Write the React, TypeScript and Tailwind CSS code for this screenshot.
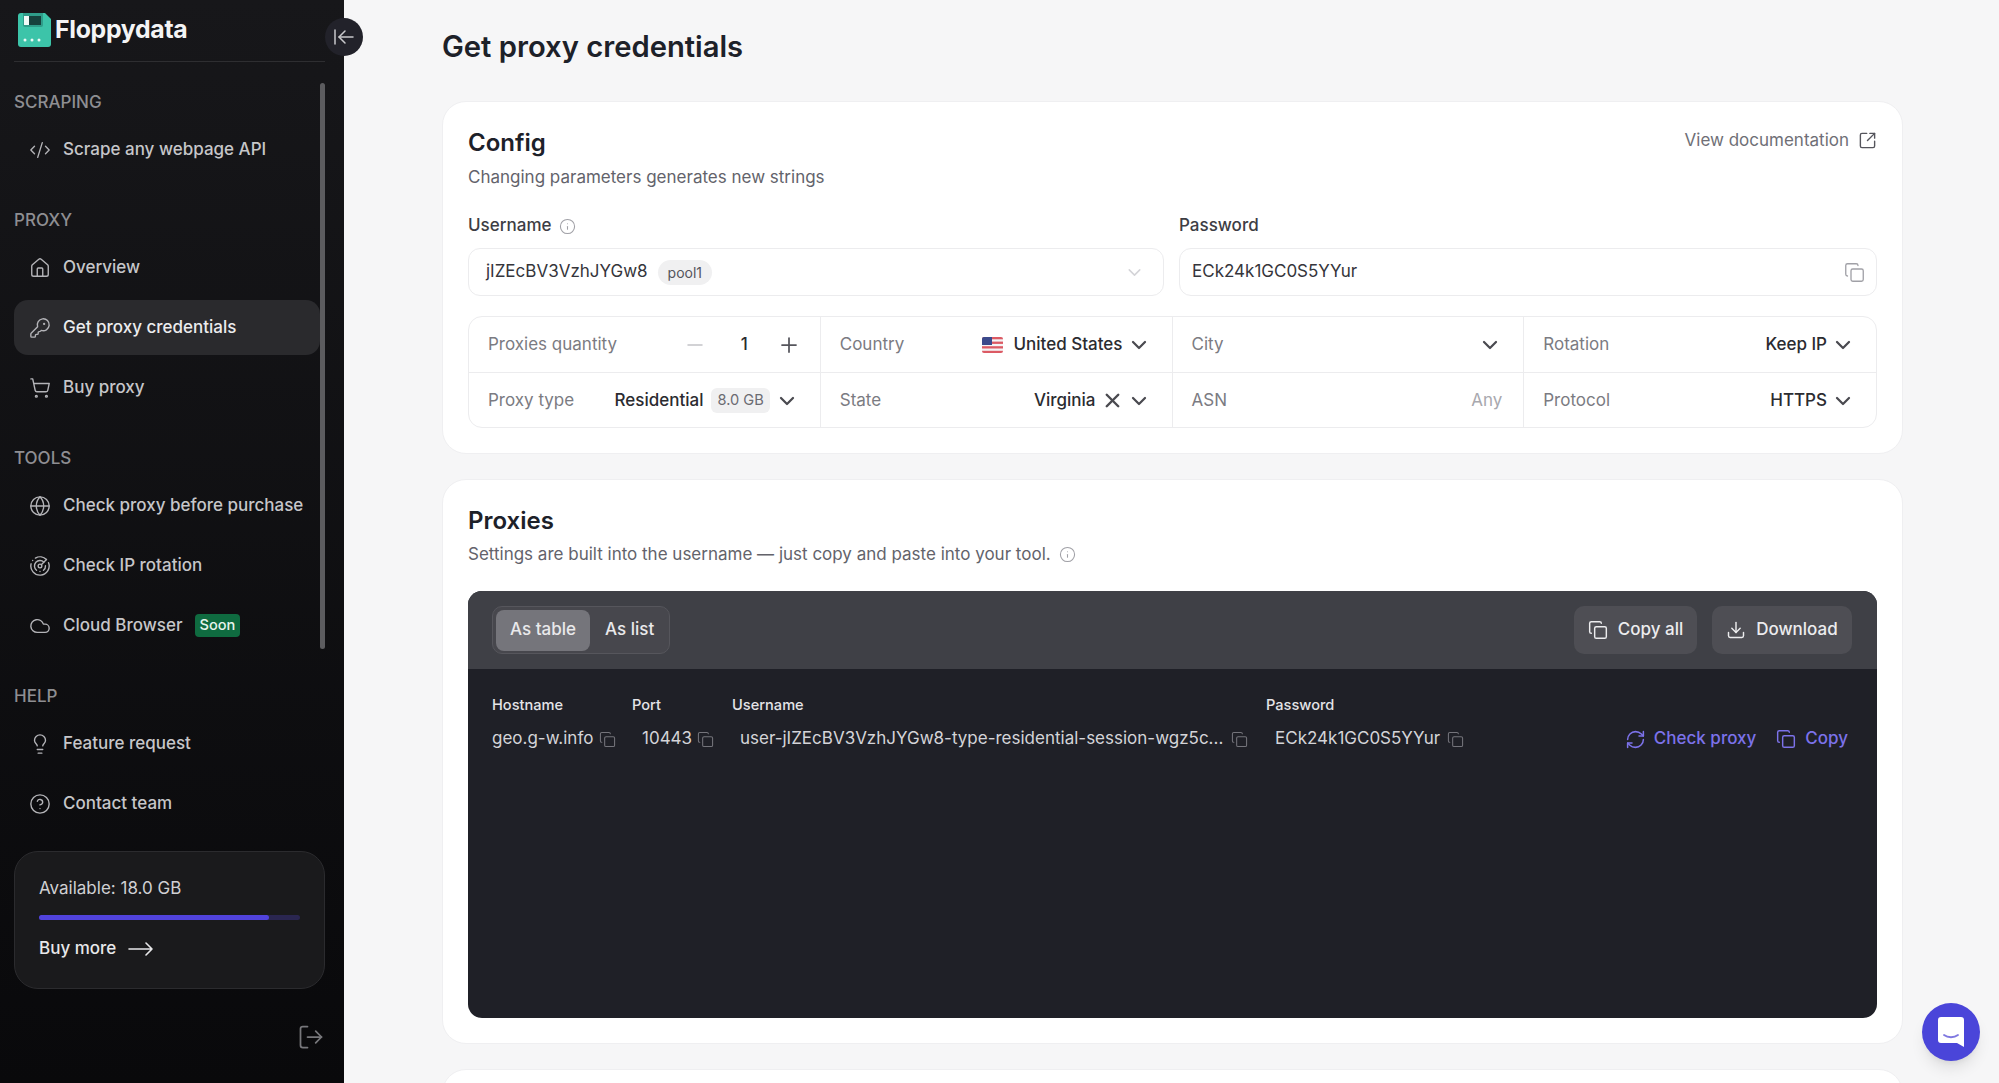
import React from 'react';
import {
  ArrowLeftToLine,
  ChevronDown,
  CircleHelp,
  Cloud,
  CodeXml,
  Copy,
  Download,
  Globe,
  House,
  Info,
  KeyRound,
  Lightbulb,
  LogOut,
  Minus,
  Plus,
  Radar,
  RefreshCw,
  ShoppingCart,
  SquareArrowOutUpRight,
  X,
} from 'lucide-react';

function LogoMark() {
  return (
    <svg width="33" height="34" viewBox="0 0 33 34" className="shrink-0">
      <path d="M3 0h24l6 6v25a3 3 0 0 1-3 3H3a3 3 0 0 1-3-3V3a3 3 0 0 1 3-3z" fill="#3cc4a9" />
      <path d="M5 0h20v12a2 2 0 0 1-2 2H7a2 2 0 0 1-2-2z" fill="#2f9d8a" />
      <rect x="6" y="3" width="5" height="9" fill="#f2faf8" />
      <rect x="11" y="3" width="12" height="9" fill="#12332f" opacity="0.85" />
      <circle cx="7" cy="27" r="1.5" fill="#eafaf6" />
      <circle cx="14" cy="27" r="1.5" fill="#eafaf6" />
      <circle cx="21" cy="27" r="1.5" fill="#eafaf6" />
    </svg>
  );
}

function UsFlag() {
  return (
    <svg width="21" height="16" viewBox="0 0 21 16" className="shrink-0 rounded-[2px]">
      <rect width="21" height="16" fill="#f4f4f5" />
      <rect y="0" width="21" height="2.3" fill="#dc5a64" />
      <rect y="4.6" width="21" height="2.3" fill="#dc5a64" />
      <rect y="9.2" width="21" height="2.3" fill="#dc5a64" />
      <rect y="13.8" width="21" height="2.2" fill="#dc5a64" />
      <rect width="10" height="8" fill="#3b4a8c" />
    </svg>
  );
}

function NavItem({
  icon: Icon,
  label,
  active,
  soon,
}: {
  icon: React.ComponentType<{ className?: string; strokeWidth?: number }>;
  label: string;
  active?: boolean;
  soon?: boolean;
}) {
  return (
    <div
      className={`flex h-[55px] items-center gap-3 rounded-[14px] pl-[15px] text-[17px] font-medium ${
        active ? 'bg-[#2a2a2d] text-[#ececee]' : 'text-[#c6c6c9]'
      }`}
    >
      <Icon className="h-[22px] w-[22px] shrink-0 text-[#b4b4b8]" strokeWidth={1.5} />
      <span>{label}</span>
      {soon && (
        <span className="rounded-[4px] bg-[#0f6b40] px-[5px] py-[2px] text-[14.6px] leading-[19px] text-[#e6f4ec]">
          Soon
        </span>
      )}
    </div>
  );
}

function NavSection({ title, children }: { title: string; children: React.ReactNode }) {
  return (
    <div className="mb-[31px]">
      <div className="mb-2 h-6 text-[17px] leading-6 font-medium text-[#8e8e92]">{title}</div>
      <div className="flex flex-col gap-[5px]">{children}</div>
    </div>
  );
}

function Sidebar() {
  return (
    <aside className="relative flex h-[1083px] w-[344px] shrink-0 flex-col bg-gradient-to-b from-[#17171a] to-[#09090b] px-[14px]">
      <div className="flex h-[62px] w-[311px] items-center gap-[4px] border-b border-[#2e2e31] pb-[2px] pl-1">
        <LogoMark />
        <span className="text-[24.8px] font-bold tracking-[-0.3px] text-[#f4f4f5]">Floppydata</span>
      </div>

      <button className="absolute top-[18px] left-[325px] z-10 flex h-[38px] w-[38px] items-center justify-center rounded-full bg-[#22222a] text-[#c9c9cc]">
        <ArrowLeftToLine className="h-6 w-6" strokeWidth={1.5} />
      </button>

      {/* scrollbar thumb */}
      <div className="absolute top-[83px] left-[320px] h-[566px] w-[5px] rounded-full bg-[#5c5c5f]" />

      <nav className="w-[306px] pt-[28px]">
        <NavSection title="SCRAPING">
          <NavItem icon={CodeXml} label="Scrape any webpage API" />
        </NavSection>
        <NavSection title="PROXY">
          <NavItem icon={House} label="Overview" />
          <NavItem icon={KeyRound} label="Get proxy credentials" active />
          <NavItem icon={ShoppingCart} label="Buy proxy" />
        </NavSection>
        <NavSection title="TOOLS">
          <NavItem icon={Globe} label="Check proxy before purchase" />
          <NavItem icon={Radar} label="Check IP rotation" />
          <NavItem icon={Cloud} label="Cloud Browser" soon />
        </NavSection>
        <NavSection title="HELP">
          <NavItem icon={Lightbulb} label="Feature request" />
          <NavItem icon={CircleHelp} label="Contact team" />
        </NavSection>
      </nav>

      <div className="mt-[-11px] h-[138px] w-[311px] rounded-[24px] border border-[#2b2b2e] bg-[#1a1a1c] px-6 pt-6">
        <div className="text-[17px] leading-6 font-normal text-[#d0d0d3]">Available: 18.0 GB</div>
        <div className="mt-[15px] h-[5px] w-[261px] rounded-full bg-[#2a2650]">
          <div className="h-full w-[230px] rounded-full bg-[#5143dc]" />
        </div>
        <div className="mt-[16px] flex h-[26px] items-center gap-3 text-[17px] font-medium text-[#e8e8ea]">
          Buy more
          <svg width="25" height="14" viewBox="0 0 25 14" fill="none" stroke="currentColor" strokeWidth="1.6" strokeLinecap="round" strokeLinejoin="round">
            <path d="M1 7h23M18 1l6 6-6 6" />
          </svg>
        </div>
      </div>

      <div className="mt-[34px] flex w-[311px] justify-end">
        <LogOut className="h-[28px] w-[28px] text-[#77777b]" strokeWidth={1.5} />
      </div>
    </aside>
  );
}

function Cell({
  label,
  children,
  right,
  bottom,
}: {
  label: string;
  children: React.ReactNode;
  right?: boolean;
  bottom?: boolean;
}) {
  return (
    <div
      className={`flex items-center justify-between pr-[21px] pl-[19px] ${right ? '' : 'border-r border-[#ececee]'} ${
        bottom ? 'h-[55px]' : 'h-[56px] border-b border-[#ececee]'
      }`}
    >
      <span className="text-[#7b7b82]">{label}</span>
      <div className="flex items-center font-medium text-[#2b2b30]">{children}</div>
    </div>
  );
}

function Chevron({ className = 'ml-1' }: { className?: string }) {
  return <ChevronDown className={`h-6 w-6 text-[#4a4a50] ${className}`} strokeWidth={2.25} />;
}

function ConfigCard() {
  return (
    <section className="h-[353px] rounded-[24px] border border-[#efeff1] bg-white px-[25px]">
      <div className="flex items-start justify-between pt-[23px]">
        <div>
          <h2 className="text-[24px] leading-9 font-semibold text-[#1d2129]">Config</h2>
          <p className="mt-1 text-[17px] leading-6 text-[#63636b]">Changing parameters generates new strings</p>
        </div>
        <a className="flex items-center gap-[9px] pt-[3px] text-[17px] leading-6 text-[#6f6f76]">
          View documentation
          <SquareArrowOutUpRight className="h-[19px] w-[19px] text-[#55555c]" strokeWidth={1.75} />
        </a>
      </div>

      <div className="mt-[25px] grid grid-cols-[696px_698px] gap-[15px]">
        <div>
          <div className="mb-[10px] flex h-6 items-center gap-2 text-[17px] font-medium text-[#3d3d44]">
            Username
            <Info className="h-[17px] w-[17px] text-[#a0a0a6]" strokeWidth={1.5} />
          </div>
          <div className="flex h-[48px] items-center justify-between rounded-[12px] border border-[#ececee] pr-[18px] pl-[17px] text-[17px] text-[#35353b]">
            <div className="flex items-center gap-[10px]">
              jIZEcBV3VzhJYGw8
              <span className="rounded-full bg-[#f0f0f1] px-[10px] py-[2px] text-[14px] leading-[21px] text-[#55555c]">
                pool1
              </span>
            </div>
            <ChevronDown className="h-[21px] w-[21px] text-[#d4d4d8]" strokeWidth={1.75} />
          </div>
        </div>
        <div>
          <div className="mb-[10px] flex h-6 items-center text-[17px] font-medium text-[#3d3d44]">Password</div>
          <div className="flex h-[48px] items-center justify-between rounded-[12px] border border-[#ececee] pr-[11px] pl-3 text-[17px] text-[#35353b]">
            ECk24k1GC0S5YYur
            <Copy className="h-[21px] w-[21px] text-[#a0a0a6]" strokeWidth={1.5} />
          </div>
        </div>
      </div>

      <div className="mt-[20px] grid h-[112px] grid-cols-4 rounded-[14px] border border-[#ececee] text-[17px]">
        <Cell label="Proxies quantity">
          <Minus className="h-6 w-6 text-[#c4c4c8]" strokeWidth={1.5} />
          <span className="mr-[29px] ml-[34px]">1</span>
          <Plus className="mr-[-2px] h-6 w-6 text-[#55555c]" strokeWidth={1.75} />
        </Cell>
        <Cell label="Country">
          <UsFlag />
          <span className="ml-[10px]">United States</span>
          <Chevron />
        </Cell>
        <Cell label="City">
          <Chevron />
        </Cell>
        <Cell label="Rotation" right>
          Keep IP
          <Chevron />
        </Cell>
        <Cell label="Proxy type" bottom>
          Residential
          <span className="ml-2 rounded-[6px] bg-[#f0f0f1] px-[6px] py-[2px] text-[14.6px] leading-[21px] font-normal text-[#6b6b72]">
            8.0 GB
          </span>
          <Chevron className="ml-[5px]" />
        </Cell>
        <Cell label="State" bottom>
          Virginia
          <X className="ml-[5px] h-[23px] w-[23px] text-[#4a4a50]" strokeWidth={2.5} />
          <Chevron className="ml-[3px]" />
        </Cell>
        <Cell label="ASN" bottom>
          <span className="font-normal text-[#a8a8ae]">Any</span>
        </Cell>
        <Cell label="Protocol" right bottom>
          HTTPS
          <Chevron />
        </Cell>
      </div>
    </section>
  );
}

function SmallCopy() {
  return <Copy className="h-[17px] w-[17px] shrink-0 text-[#74747b]" strokeWidth={1.5} />;
}

function ProxiesCard() {
  return (
    <section className="mt-[25px] h-[565px] rounded-[24px] border border-[#efeff1] bg-white px-[25px]">
      <h2 className="pt-[23px] text-[24px] leading-9 font-semibold text-[#1d2129]">Proxies</h2>
      <p className="mt-[3px] flex items-center gap-2 text-[17px] leading-6 text-[#63636b]">
        Settings are built into the username — just copy and paste into your tool.
        <Info className="h-[17px] w-[17px] text-[#a0a0a6]" strokeWidth={1.5} />
      </p>

      <div className="mt-[25px] h-[427px] overflow-hidden rounded-[14px] bg-[#1f2027]">
        <div className="flex h-[78px] items-center justify-between bg-[#3f4046] pr-[25px] pl-[24px]">
          <div className="flex h-[48px] items-center rounded-[10px] border border-[#56565c] bg-[#47474d] pl-[3px] text-[17px] font-medium text-[#e9e9eb]">
            <span className="flex h-[41px] w-[94px] items-center justify-center rounded-[8px] bg-[#75757b]">As table</span>
            <span className="px-[15px]">As list</span>
          </div>
          <div className="flex gap-[15px] text-[17px] font-medium text-[#ececee]">
            <button className="flex h-[48px] w-[123px] items-center justify-center gap-[10px] rounded-[10px] bg-[#4e4e54]">
              <Copy className="h-[20px] w-[20px]" strokeWidth={1.75} />
              Copy all
            </button>
            <button className="flex h-[48px] w-[140px] items-center justify-center gap-[10px] rounded-[10px] bg-[#4e4e54]">
              <Download className="h-[20px] w-[20px]" strokeWidth={1.75} />
              Download
            </button>
          </div>
        </div>

        <div className="pt-[26px] pl-[24px]">
          <div className="grid grid-cols-[140px_100px_534px_auto] text-[14.6px] leading-5 font-medium text-[#e4e4e7]">
            <span>Hostname</span>
            <span>Port</span>
            <span>Username</span>
            <span>Password</span>
          </div>
          <div className="mt-[12px] flex h-6 items-center whitespace-nowrap text-[17px] text-[#d4d4d8]">
            <span className="w-[101px]">geo.g-w.info</span>
            <span className="ml-[6px]">
              <SmallCopy />
            </span>
            <span className="ml-[26px] w-[50px]">10443</span>
            <span className="ml-[5px]">
              <SmallCopy />
            </span>
            <span className="ml-[26px] w-[484px]">user-jIZEcBV3VzhJYGw8-type-residential-session-wgz5c...</span>
            <span className="ml-[7px]">
              <SmallCopy />
            </span>
            <span className="ml-[27px] w-[166px]">ECk24k1GC0S5YYur</span>
            <span className="ml-[6px]">
              <SmallCopy />
            </span>
            <div className="ml-auto flex items-center pr-[29px] font-medium text-[#7c72ea]">
              <RefreshCw className="mr-[8px] h-[21px] w-[21px]" strokeWidth={1.75} />
              Check proxy
              <Copy className="mr-[9px] ml-[20px] h-[20px] w-[20px]" strokeWidth={1.75} />
              Copy
            </div>
          </div>
        </div>
      </div>
    </section>
  );
}

export default function App() {
  return (
    <div className="flex h-[1083px] overflow-hidden bg-[#f6f6f7] font-['Inter',sans-serif]">
      <Sidebar />
      <main className="relative flex-1 px-[98px] pt-[24px]">
        <h1 className="mb-[31px] h-[46px] text-[29.2px] leading-[46px] font-semibold text-[#1d2129]">
          Get proxy credentials
        </h1>
        <ConfigCard />
        <ProxiesCard />
        <div className="mt-[25px] h-[60px] rounded-t-[24px] border border-[#efeff1] bg-white" />
      </main>
      <button className="absolute top-[1003px] left-[1922px] flex h-[58px] w-[58px] items-center justify-center rounded-full bg-[#4a45d9] shadow-lg">
        <svg width="26" height="30" viewBox="0 0 26 30">
          <path d="M3 0h20a3 3 0 0 1 3 3v27l-7-4H3a3 3 0 0 1-3-3V3a3 3 0 0 1 3-3z" fill="#fff" />
          <path d="M6 18c4 3 10 3 14 0" fill="none" stroke="#7f78e0" strokeWidth="1.8" strokeLinecap="round" />
        </svg>
      </button>
    </div>
  );
}
